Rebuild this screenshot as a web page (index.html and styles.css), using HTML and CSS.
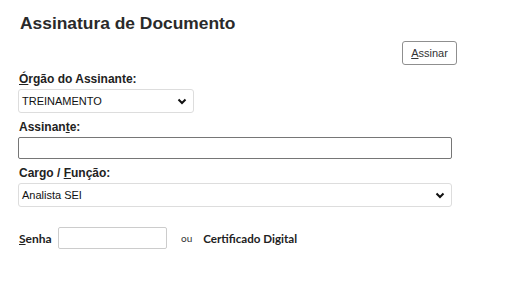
FILE: index.html
```html
<!DOCTYPE html>
<html lang="pt-BR">
<head>
    <meta charset="UTF-8">
    <title>Assinatura de Documento</title>
    <link rel="stylesheet" href="styles.css">
</head>
<body>
    <div class="page">
        <h1>Assinatura de Documento</h1>
        <div class="actions">
            <button class="btn"><u>A</u>ssinar</button>
        </div>
        <label class="lbl"><u>Ó</u>rgão do Assinante:</label>
        <div class="select short">
            <span>TREINAMENTO</span>
            <svg width="10" height="7" viewBox="0 0 10 7"><path d="M1.5 1.5 L5 5 L8.5 1.5" fill="none" stroke="#111" stroke-width="2"/></svg>
        </div>
        <label class="lbl">Assinan<u>t</u>e:</label>
        <div class="input wide"></div>
        <label class="lbl">Cargo / <u>F</u>unção:</label>
        <div class="select wide tall">
            <span>Analista SEI</span>
            <svg width="10" height="7" viewBox="0 0 10 7"><path d="M1.5 1.5 L5 5 L8.5 1.5" fill="none" stroke="#111" stroke-width="2"/></svg>
        </div>
        <div class="senha-row">
            <span class="senha"><u>S</u>enha</span>
            <div class="input pass"></div>
            <span class="ou">ou</span>
            <span class="cert">Certificado Digital</span>
        </div>
    </div>
</body>
</html>
```
FILE: styles.css
```css
body { margin: 0; font-family: "Liberation Sans", Arial, sans-serif; color: #222; background: #fff; }
.page { width: 439px; padding: 12px 0 0 18px; display: flex; flex-direction: column; align-items: flex-start; }
h1 { font-size: 17.4px; font-weight: bold; margin: 0 0 0 2px; line-height: 22px; color: #2a2a2a; }
.actions { align-self: stretch; display: flex; justify-content: flex-end; margin-top: 7px; }
.btn { width: 55px; height: 24px; background: #fff; border: 1px solid #8f8f8f; border-radius: 3px; font-family: "Liberation Sans", Arial, sans-serif; font-size: 11px; color: #333; padding: 0; }
.lbl { display: block; font-size: 12px; font-weight: bold; line-height: 14px; margin: 7px 0 3px 1px; color: #222; }
.select { box-sizing: border-box; height: 24px; border: 1px solid #ddd; border-radius: 3px; display: flex; align-items: center; justify-content: space-between; padding: 0 6px 0 3px; font-size: 11px; color: #111; }
.select.short { width: 176px; }
.wide { width: 434px; }
.input { box-sizing: border-box; height: 22px; border: 1px solid #767676; border-radius: 2px; background: #fff; }
.senha-row { display: flex; align-items: center; margin-top: 20px; font-family: Lato, "Open Sans", sans-serif; }
.senha { font-size: 12px; font-weight: bold; color: #222; margin-left: 1px; width: 39px; }
.input.pass { width: 109px; height: 22px; border-color: #ccc; }
.ou { font-size: 10px; color: #333; margin-left: 14px; }
.cert { font-size: 11.6px; font-weight: bold; color: #222; margin-left: 11px; }
```
